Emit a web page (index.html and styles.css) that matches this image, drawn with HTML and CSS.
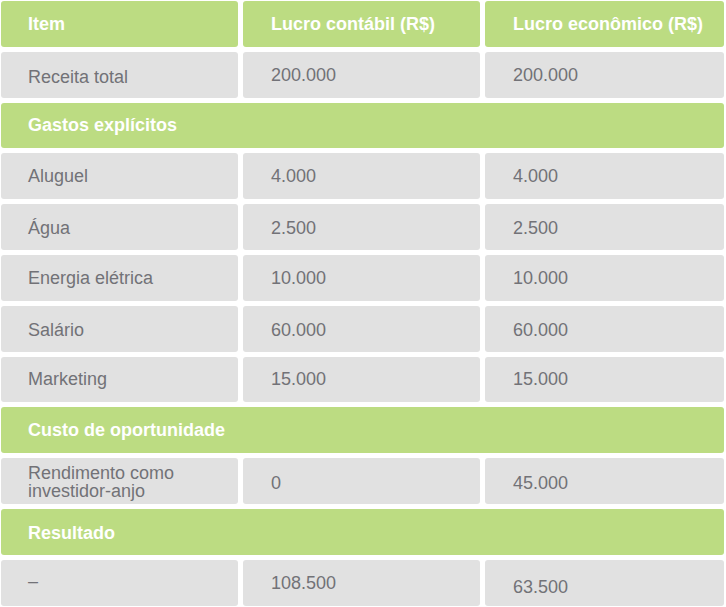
FILE: index.html
```html
<!DOCTYPE html>
<html lang="pt-BR">
<head>
<meta charset="utf-8">
<title>Lucro contábil x Lucro econômico</title>
<link rel="stylesheet" href="styles.css">
</head>
<body>
<div class="table">
  <div class="cell head">Item</div>
  <div class="cell head col2">Lucro contábil (R$)</div>
  <div class="cell head col3">Lucro econômico (R$)</div>

  <div class="cell body down4">Receita total</div>
  <div class="cell body col2">200.000</div>
  <div class="cell body col3">200.000</div>

  <div class="cell section">Gastos explícitos</div>

  <div class="cell body">Aluguel</div>
  <div class="cell body col2">4.000</div>
  <div class="cell body col3">4.000</div>

  <div class="cell body down2">Água</div>
  <div class="cell body col2 down2">2.500</div>
  <div class="cell body col3 down2">2.500</div>

  <div class="cell body">Energia elétrica</div>
  <div class="cell body col2">10.000</div>
  <div class="cell body col3">10.000</div>

  <div class="cell body down2">Salário</div>
  <div class="cell body col2 down2">60.000</div>
  <div class="cell body col3 down2">60.000</div>

  <div class="cell body">Marketing</div>
  <div class="cell body col2">15.000</div>
  <div class="cell body col3">15.000</div>

  <div class="cell section">Custo de oportunidade</div>

  <div class="cell body two">Rendimento como<br>investidor-anjo</div>
  <div class="cell body col2 down4">0</div>
  <div class="cell body col3 down4">45.000</div>

  <div class="cell section down2">Resultado</div>

  <div class="cell body up4">–</div>
  <div class="cell body col2">108.500</div>
  <div class="cell body col3 down8">63.500</div>
</div>
</body>
</html>
```
FILE: styles.css
```css
html, body {
  margin: 0;
  padding: 0;
  background: #ffffff;
}

body {
  font-family: "Liberation Sans", Arial, Helvetica, sans-serif;
  font-size: 18px;
}

.table {
  margin: 1px 0 0 1px;
  display: grid;
  grid-template-columns: 237px 237px 239px;
  grid-auto-rows: 45.8px;
  column-gap: 5px;
  row-gap: 5px;
  width: 723px;
}

.cell {
  display: flex;
  align-items: center;
  padding-left: 27px;
  border-radius: 3px;
  box-sizing: border-box;
  line-height: 20px;
}

.col2 { padding-left: 28px; }
.col3 { padding-left: 28px; }

.head {
  background: #bcdc82;
  color: #ffffff;
  font-weight: bold;
}

.section {
  grid-column: 1 / -1;
  background: #bcdc82;
  color: #ffffff;
  font-weight: bold;
}

.body {
  background: #e1e1e1;
  color: #727277;
}

.two {
  line-height: 18px;
  padding-top: 1px;
}

.down2 { padding-top: 2px; }
.down4 { padding-top: 4px; }
.down8 { padding-top: 8px; }
.up4 { padding-bottom: 4px; }
```
